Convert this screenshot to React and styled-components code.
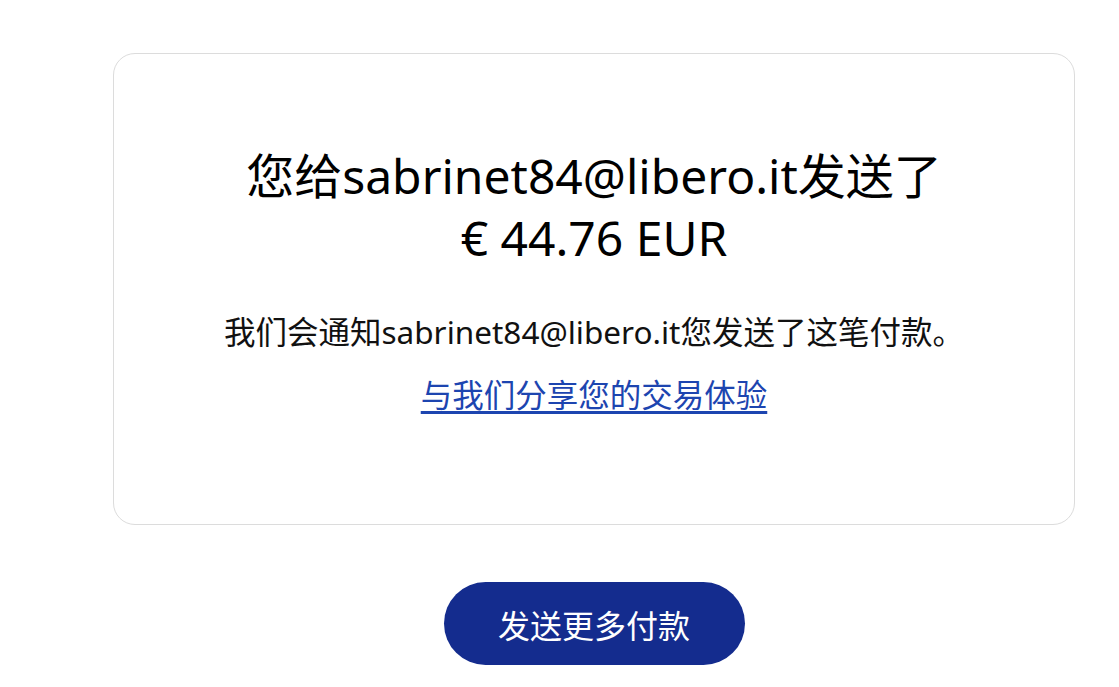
import React from "react";
import styled, { createGlobalStyle } from "styled-components";

const GlobalStyle = createGlobalStyle`
  html, body {
    margin: 0;
    background: #ffffff;
  }
  body {
    font-family: "Noto Sans", "Noto Sans CJK SC", sans-serif;
    color: #000000;
  }
`;

const Page = styled.main`
  display: flex;
  flex-direction: column;
  align-items: center;
  padding: 53px 44px 0 113px;
`;

const Card = styled.section`
  box-sizing: border-box;
  width: 100%;
  height: 472px;
  border: 1px solid #dcdcdc;
  border-radius: 22px;
  padding: 91px 30px 0;
  display: flex;
  flex-direction: column;
  align-items: center;
  text-align: center;
`;

const Title = styled.h1`
  margin: 0;
  font-size: 48px;
  line-height: 62px;
  font-weight: 400;
  color: #000;
`;

const Note = styled.p`
  margin: 41px 0 0;
  font-size: 31.5px;
  line-height: 44px;
  color: #111;
`;

const ShareLink = styled.a`
  margin-top: 19px;
  font-size: 31.5px;
  line-height: 44px;
  color: #1d45b0;
  text-decoration: underline;
  text-underline-offset: 4px;
  cursor: pointer;
`;

const Button = styled.button`
  margin-top: 57px;
  width: 301px;
  height: 83px;
  border: none;
  border-radius: 42px;
  background: #142c8e;
  color: #ffffff;
  font-family: "Noto Sans", "Noto Sans CJK SC", sans-serif;
  font-size: 32px;
  cursor: pointer;
`;

const App = () => {
  return (
    <>
      <GlobalStyle />
      <Page>
        <Card>
          <Title>
            您给sabrinet84@libero.it发送了
            <br />€ 44.76 EUR
          </Title>
          <Note>我们会通知sabrinet84@libero.it您发送了这笔付款。</Note>
          <ShareLink>与我们分享您的交易体验</ShareLink>
        </Card>
        <Button>发送更多付款</Button>
      </Page>
    </>
  );
};

export default App;
